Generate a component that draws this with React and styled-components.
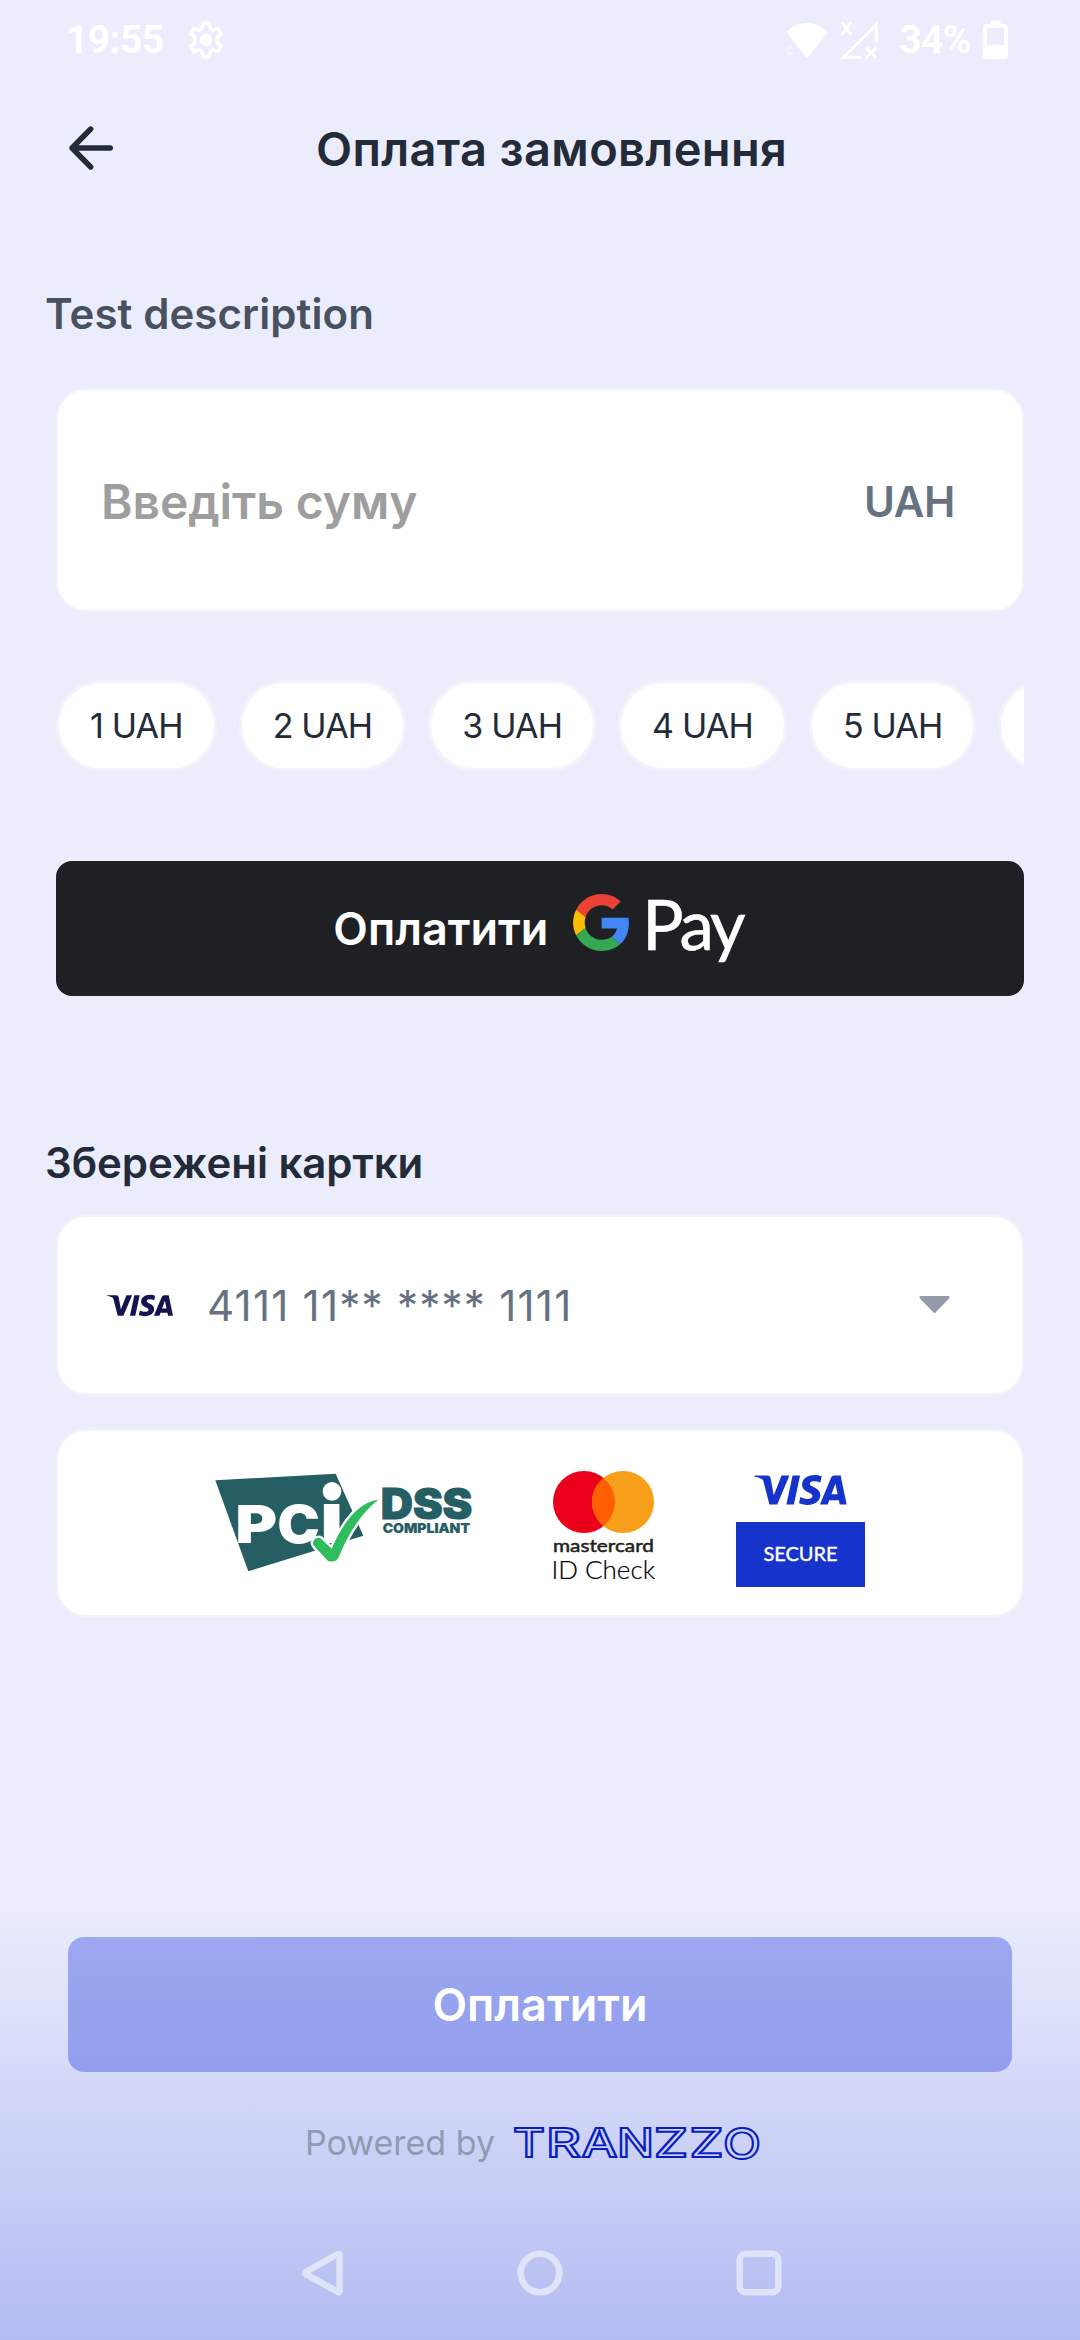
import React from "react";
import styled, { createGlobalStyle } from "styled-components";
import { SiVisa } from "react-icons/si";

const GlobalStyle = createGlobalStyle`
  * { box-sizing: border-box; }
  body { margin: 0; background: #ebedfc; }
  button { border: 0; padding: 0; background: none; font: inherit; color: inherit; }
  svg { flex: none; overflow: visible; }
`;

const Screen = styled.div`
  width: 1080px;
  height: 2340px;
  display: flex;
  flex-direction: column;
  overflow: hidden;
  background: #ebedfc;
  color: #232b38;
  font-family: Inter, "Noto Sans", sans-serif;
`;

const StatusBar = styled.div`
  height: 80px;
  flex: none;
  display: flex;
  align-items: center;
  justify-content: space-between;
  padding: 0 72px 0 66px;
  color: #fff;
  font: 700 39px/46px Roboto, sans-serif;
`;

const StatusGroup = styled.div`
  display: flex;
  align-items: center;
  gap: ${(p) => p.$gap}px;
`;

const StatusText = styled.span`
  letter-spacing: -0.6px;
`;

const Header = styled.header`
  height: 136px;
  flex: none;
  display: flex;
  align-items: center;
  padding-left: 69px;
  gap: 203px;
`;

const BackButton = styled.button`
  width: 44px;
  height: 44px;
  display: flex;
`;

const Title = styled.h1`
  margin: 0;
  padding-top: 1px;
  font-size: 47px;
  line-height: 60px;
  font-weight: 600;
  letter-spacing: 0.35px;
  white-space: nowrap;
`;

const Content = styled.main`
  display: flex;
  flex-direction: column;
  padding: 68px 56px 0;
`;

const Label = styled.h2`
  margin: ${(p) => p.$margin};
  font-size: 42px;
  line-height: 60px;
  font-weight: 600;
  color: ${(p) => p.$color};
  letter-spacing: ${(p) => p.$spacing}px;
  white-space: nowrap;
`;

const Card = styled.section`
  display: flex;
  height: ${(p) => p.$height}px;
  align-items: ${(p) => p.$align || "center"};
  justify-content: ${(p) => p.$justify || "flex-start"};
  gap: ${(p) => p.$gap || 0}px;
  padding: ${(p) => p.$padding};
  margin-top: ${(p) => p.$top || 0}px;
  background: #fff;
  border: 2px solid #f1f3fb;
  border-radius: 30px;
`;

const Placeholder = styled.span`
  flex: 1;
  font-size: 48px;
  line-height: 60px;
  font-weight: 600;
  color: #9e9e9e;
  letter-spacing: -0.1px;
`;

const Currency = styled.span`
  font-size: 42px;
  line-height: 60px;
  font-weight: 600;
  color: #667282;
  letter-spacing: -0.3px;
`;

const Chips = styled.div`
  display: flex;
  gap: 22px;
  margin-top: 68px;
  overflow: hidden;
`;

const Chip = styled.button`
  flex: none;
  height: 91px;
  padding: 0 31px;
  border: 3px solid #f1f4fb;
  border-radius: 46px;
  background: #fff;
  font-size: 34px;
  line-height: 40px;
  letter-spacing: -0.82px;
  white-space: nowrap;
`;

const Button = styled.button`
  height: 135px;
  display: flex;
  align-items: center;
  justify-content: center;
  border-radius: 16px;
  color: #fff;
  font-size: 45px;
  line-height: 56px;
  font-weight: 600;
`;

const GooglePayButton = styled(Button)`
  margin-top: 90px;
  padding-right: 4px;
  background: #1f2024;
`;

const GoogleMark = styled.svg`
  width: 56px;
  height: 57px;
  margin: -12px 13px 0 25px;
`;

const PayWord = styled.span`
  font: 400 69px/70px Lato, sans-serif;
  letter-spacing: -3px;
  margin-top: -9px;
  -webkit-text-stroke: 0.6px #fff;
`;

const VisaMark = styled(SiVisa)`
  flex: none;
  width: ${(p) => p.$width}px;
  height: ${(p) => p.$height}px;
  color: ${(p) => p.$color};
`;

const CardNumber = styled.span`
  flex: 1;
  padding-top: 1px;
  font-size: 42px;
  line-height: 60px;
  font-weight: 400;
  color: #667282;
  letter-spacing: 1.25px;
`;

const LogoSlot = styled.div`
  display: flex;
  flex-direction: column;
  align-items: center;
  margin-top: ${(p) => p.$top}px;
  width: ${(p) => p.$width}px;
`;

const SecureBox = styled.div`
  width: 129px;
  height: 65px;
  margin-top: 17px;
  padding-bottom: 4px;
  display: flex;
  align-items: center;
  justify-content: center;
  background: #1633cb;
  color: #fff;
  font: 400 20px/24px Lato, sans-serif;
  -webkit-text-stroke: 0.4px #fff;
`;

const Footer = styled.footer`
  margin-top: auto;
  height: 440px;
  flex: none;
  display: flex;
  flex-direction: column;
  padding: 37px 68px 0;
  background: linear-gradient(#ebedfc 0%, #b3bcf2 100%);
`;

const SubmitButton = styled(Button)`
  background: rgba(54, 76, 224, 0.42);
`;

const Powered = styled.div`
  display: flex;
  align-items: center;
  justify-content: center;
  gap: 19px;
  margin-top: 46px;
  padding-right: 15px;
  height: 50px;
  color: #929ab0;
  font-size: 34px;
  line-height: 48px;
`;

const NavBar = styled.nav`
  display: flex;
  align-items: center;
  justify-content: space-between;
  margin-top: 82px;
  padding: 0 230px 0 233px;
`;

const amounts = [1, 2, 3, 4, 5, 6];

function GearIcon() {
  return (
    <svg width="38" height="38" viewBox="1.5 1.5 21 21">
      <path
        fill="none"
        stroke="#fff"
        strokeWidth="2"
        strokeLinejoin="round"
        d="M10.2 2.8h3.6l.5 2.8 1.6.95 2.7-1 1.8 3.1-2.2 1.8v3.1l2.2 1.8-1.8 3.1-2.7-1-1.6.95-.5 2.8h-3.6l-.5-2.8-1.6-.95-2.7 1-1.8-3.1 2.2-1.8v-3.1l-2.2-1.8 1.8-3.1 2.7 1 1.6-.95z"
      />
      <circle cx="12" cy="12" r="3.4" fill="#fff" />
    </svg>
  );
}

function WifiIcon() {
  return (
    <svg width="42" height="35" viewBox="0 0 42 35">
      <path fill="#fff" d="M0 9Q9 0 21 0T42 9L22 34q-1 1-2 0z" />
      <path fill="#fff" opacity=".4" d="M0 26l4-5 4 5zM0 29h8l-4 5z" />
    </svg>
  );
}

function SignalIcon() {
  return (
    <svg width="38" height="38" viewBox="0 0 38 38" fill="none" stroke="#fff" strokeWidth="3">
      <path d="M36.2 21V4L3.5 36.3H21" />
      <path d="M2 1l9 13M11 1L2 14" />
      <path d="M26 26.5l10.5 10.5M36.5 26.5L26 37" />
    </svg>
  );
}

function BatteryIcon() {
  return (
    <svg width="25" height="38" viewBox="0 0 25 38" fill="#fff">
      <path
        fillRule="evenodd"
        d="M7.5 0h10v3H22a3 3 0 0 1 3 3v29a3 3 0 0 1-3 3H3a3 3 0 0 1-3-3V6a3 3 0 0 1 3-3h4.5zM4 7v17h17V7z"
      />
    </svg>
  );
}

function BackIcon() {
  return (
    <svg width="44" height="44" viewBox="0 0 44 44" fill="none" stroke="#232b38" strokeWidth="5.4" strokeLinecap="round" strokeLinejoin="round">
      <path d="M41.3 22H3M21.7 3L3 22l18.7 19" />
    </svg>
  );
}

function GoogleIcon() {
  return (
    <GoogleMark viewBox="0 0 47 48">
      <path fill="#ea4335" d="M24 9.5c3.54 0 6.71 1.22 9.21 3.6l6.85-6.85C35.9 2.38 30.47 0 24 0 14.62 0 6.51 5.38 2.56 13.22l7.98 6.19C12.43 13.72 17.74 9.5 24 9.5z" />
      <path fill="#4285f4" d="M46.98 24.55c0-1.57-.15-3.09-.38-4.55H24v9.02h12.94c-.58 2.96-2.26 5.48-4.78 7.18l7.73 6c4.51-4.18 7.09-10.36 7.09-17.65z" />
      <path fill="#fbbc05" d="M10.53 28.59c-.48-1.45-.76-2.99-.76-4.59s.27-3.14.76-4.59l-7.98-6.19C.92 16.46 0 20.12 0 24c0 3.88.92 7.54 2.56 10.78l7.97-6.19z" />
      <path fill="#34a853" d="M24 48c6.48 0 11.93-2.13 15.89-5.81l-7.73-6c-2.15 1.45-4.92 2.3-8.16 2.3-6.26 0-11.57-4.22-13.47-9.91l-7.98 6.19C6.51 42.62 14.62 48 24 48z" />
    </GoogleMark>
  );
}

function PciLogo() {
  return (
    <svg width="257" height="100" viewBox="45 70 771 300" fontFamily="Inter, sans-serif" fontWeight="900">
      <path fill="#255e63" d="M46 92L407 72l83 186-345 107z" />
      <g fill="#fff">
        <text x="106" y="279" fontSize="158" textLength="126" lengthAdjust="spacingAndGlyphs">P</text>
        <text x="232" y="279" fontSize="158" textLength="128" lengthAdjust="spacingAndGlyphs">C</text>
        <text x="360" y="279" fontSize="212" textLength="70" lengthAdjust="spacingAndGlyphs">i</text>
        <circle cx="396" cy="125" r="28" />
      </g>
      <path
        fill="#2dbd5c"
        stroke="#fff"
        strokeWidth="14"
        paintOrder="stroke"
        d="M343 270C350 262 362 262 368 272L395 297C420 240 465 158 535 150C490 185 450 240 415 325C408 338 385 340 378 327L343 290C337 283 337 277 343 270Z"
      />
      <g fill="#255e63" stroke="#255e63">
        <text x="542" y="207" fontSize="126" textLength="275" lengthAdjust="spacingAndGlyphs" strokeWidth="3">DSS</text>
        <text x="548" y="250" fontSize="39" textLength="262" lengthAdjust="spacingAndGlyphs" strokeWidth="0.5">COMPLIANT</text>
      </g>
    </svg>
  );
}

function MastercardLogo() {
  return (
    <svg width="102" height="114" viewBox="0 0 102 114" fontFamily="Lato, sans-serif">
      <circle cx="31" cy="31" r="31" fill="#eb001b" />
      <circle cx="70" cy="31" r="31" fill="#f79e1b" />
      <path fill="#ff5f00" d="M50.5 6.9a31 31 0 0 1 0 48.2a31 31 0 0 1 0-48.2z" />
      <text x="0" y="80.7" fontSize="17.5" fontWeight="400" fill="#231f20" stroke="#231f20" strokeWidth="0.5" textLength="101" lengthAdjust="spacingAndGlyphs">mastercard</text>
      <text x="-1.5" y="107.5" fontSize="24.5" fontWeight="300" fill="#000" stroke="#000" strokeWidth="0.2" textLength="103.5" lengthAdjust="spacingAndGlyphs">ID Check</text>
    </svg>
  );
}

const brandLetters = [
  { ch: "T", x: -1, w: 32 },
  { ch: "R", x: 32, w: 35 },
  { ch: "A", x: 67.5, w: 36 },
  { ch: "N", x: 103, w: 37 },
  { ch: "Z", x: 140, w: 34 },
  { ch: "Z", x: 175.5, w: 34 },
];

function TranzzoLogo() {
  return (
    <svg width="246" height="34" viewBox="0 0 246 34" fontFamily="Inter, sans-serif" fontWeight="500" fill="none" stroke="#0a1fc0" strokeWidth="1.9">
      {brandLetters.map((l, i) => (
        <text key={i} x={l.x} y="31" fontSize="39" textLength={l.w} lengthAdjust="spacingAndGlyphs">
          {l.ch}
        </text>
      ))}
      <text x="209" y="32.5" fontSize="43" textLength="38" lengthAdjust="spacingAndGlyphs">O</text>
    </svg>
  );
}

export default function App() {
  return (
    <Screen>
      <GlobalStyle />
      <StatusBar>
        <StatusGroup $gap={23}>
          <StatusText>19:55</StatusText>
          <GearIcon />
        </StatusGroup>
        <StatusGroup $gap={12}>
          <WifiIcon />
          <SignalIcon />
          <StatusGroup $gap={12}>
            <StatusText>&nbsp;34%</StatusText>
            <BatteryIcon />
          </StatusGroup>
        </StatusGroup>
      </StatusBar>

      <Header>
        <BackButton><BackIcon /></BackButton>
        <Title>Оплата замовлення</Title>
      </Header>

      <Content>
        <Label $margin="0 0 44px -11px" $color="#47515f" $spacing={0.08}>Test description</Label>
        <Card $height={224} $padding="3px 67px 0 43px">
          <Placeholder>Введіть суму</Placeholder>
          <Currency>UAH</Currency>
        </Card>
        <Chips>
          {amounts.map((n) => (
            <Chip key={n}>{n} UAH</Chip>
          ))}
        </Chips>
        <GooglePayButton>
          <span>Оплатити</span>
          <GoogleIcon />
          <PayWord>Pay</PayWord>
        </GooglePayButton>
        <Label $margin="137px 0 22px -11px" $color="#232b38" $spacing={-0.05}>Збережені картки</Label>
        <Card $height={180} $padding="0 72px 0 49px" $gap={34}>
          <VisaMark viewBox="0 8.1 24 7.8" $width={66} $height={23} $color="#141450" />
          <CardNumber>4111 11** **** 1111</CardNumber>
          <svg width="31" height="18" viewBox="0 0 31 18">
            <path fill="#929bab" d="M1.5 0h28q2 1 .5 2.5L16.5 16.5q-1 1-2 0L1 2.5Q-.5 1 1.5 0z" />
          </svg>
        </Card>
        <Card $height={188} $top={34} $align="flex-start" $justify="center" $gap={81} $padding="40px 0 0">
          <LogoSlot $top={2} $width={257}><PciLogo /></LogoSlot>
          <LogoSlot $top={0} $width={102}><MastercardLogo /></LogoSlot>
          <LogoSlot $top={4} $width={129}>
            <VisaMark viewBox="0 8.1 24 7.8" $width={93} $height={30} $color="#1633cb" />
            <SecureBox>SECURE</SecureBox>
          </LogoSlot>
        </Card>
      </Content>

      <Footer>
        <SubmitButton>Оплатити</SubmitButton>
        <Powered>
          <span>Powered by</span>
          <TranzzoLogo />
        </Powered>
        <NavBar>
          <svg width="42" height="46" viewBox="0 0 42 46" fill="none" stroke="#e0e4f9" strokeWidth="6.5" strokeLinejoin="round">
            <path d="M38.5 4.5v37q-.5 1-1.5.5L4.5 24q-1.2-1 0-2L37 4q1-.5 1.5.5z" />
          </svg>
          <svg width="46" height="46" viewBox="0 0 46 46" fill="none" stroke="#e0e4f9" strokeWidth="6.5">
            <circle cx="23" cy="23" r="19.3" />
          </svg>
          <svg width="46" height="46" viewBox="0 0 46 46" fill="none" stroke="#e0e4f9" strokeWidth="6.5">
            <rect x="3.7" y="3.7" width="38.6" height="38.6" rx="6" />
          </svg>
        </NavBar>
      </Footer>
    </Screen>
  );
}
